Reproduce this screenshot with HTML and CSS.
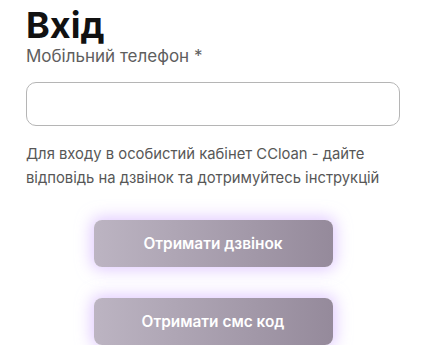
FILE: index.html
```html
<!DOCTYPE html>
<html lang="uk">
<head>
<meta charset="utf-8">
<link rel="stylesheet" href="styles.css">
</head>
<body>
<main class="login">
  <h1 class="title">Вхід</h1>
  <label class="label" for="phone">Мобільний телефон *</label>
  <input class="input" id="phone" type="tel">
  <p class="hint">Для входу в особистий кабінет CCloan - дайте відповідь на дзвінок та дотримуйтесь інструкцій</p>
  <div class="actions">
    <button class="btn" type="button">Отримати дзвінок</button>
    <button class="btn" type="button">Отримати смс код</button>
  </div>
</main>
</body>
</html>
```
FILE: styles.css
```css
html, body {
  margin: 0;
  padding: 0;
  background: #ffffff;
}
body {
  font-family: "Inter", "Open Sans", sans-serif;
}
.login {
  display: flex;
  flex-direction: column;
  padding: 6px 26px 0 26px;
  width: 374px;
}
.title {
  margin: 0;
  font-size: 36px;
  line-height: 39px;
  font-weight: 700;
  color: #111111;
}
.label {
  font-size: 17px;
  line-height: 22px;
  color: #5e5e5e;
}
.input {
  box-sizing: border-box;
  margin: 15px 0 0 0;
  width: 374px;
  height: 44px;
  border: 1px solid #b5b5b5;
  border-radius: 10px;
  background: #fff;
  outline: none;
}
.hint {
  margin: 16px 0 0 0;
  font-size: 14.8px;
  line-height: 24px;
  color: #575757;
}
.actions {
  display: flex;
  flex-direction: column;
  align-items: center;
  gap: 31px;
  margin-top: 30px;
}
.btn {
  width: 239px;
  height: 47px;
  border: none;
  border-radius: 8px;
  background: linear-gradient(90deg, #bcb4c2 0%, #958a9b 100%);
  box-shadow: 0 0 15px 3px rgba(200, 160, 255, 0.55);
  color: #ffffff;
  font-family: "Inter", "Open Sans", sans-serif;
  font-size: 15.4px;
  font-weight: 600;
}
```
